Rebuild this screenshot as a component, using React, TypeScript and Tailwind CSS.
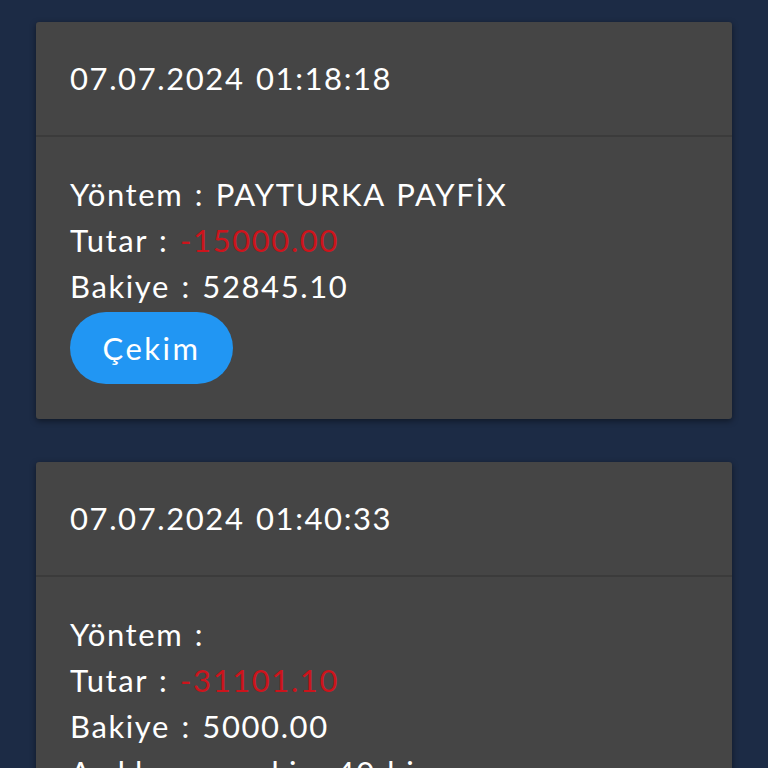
const rows = [
  {
    date: '07.07.2024 01:18:18',
    method: 'PAYTURKA PAYFİX',
    amount: '-15000.00',
    balance: '52845.10',
    button: 'Çekim',
  },
  {
    date: '07.07.2024 01:40:33',
    method: '',
    amount: '-31101.10',
    balance: '5000.00',
    note: 'çekim 40 bin',
  },
]

type Row = (typeof rows)[number] & { note?: string; button?: string }

function Card({ row }: { row: Row }) {
  return (
    <div className="bg-[#454545] rounded-[3px] shadow-[0_2px_6px_rgba(0,0,0,0.45)]">
      <div className="h-[115px] px-[34px] flex items-center border-b-2 border-[#3b3b3b]">
        <span>{row.date}</span>
      </div>
      <div className="px-[34px] pt-[34px] pb-[35px]">
        <div className="leading-[46px]">Yöntem : {row.method}</div>
        <div className="leading-[46px]">
          Tutar : <span className="text-[#cc141c]">{row.amount}</span>
        </div>
        <div className="leading-[46px]">Bakiye : {row.balance}</div>
        {row.note && <div className="leading-[46px]">Açıklama : {row.note}</div>}
        {row.button && (
          <button className="mt-[3px] h-[72px] w-[163px] rounded-full bg-[#2196f3] text-white text-[31px] tracking-[2.5px]">
            {row.button}
          </button>
        )}
      </div>
    </div>
  )
}

export default function App() {
  return (
    <div
      className="w-[768px] h-[768px] overflow-hidden bg-[#1c2b45] px-[36px] pt-[22px] text-white text-[31px] tracking-[1.6px] [word-spacing:2px]"
      style={{ fontFamily: 'Lato, "Noto Sans", sans-serif' }}
    >
      <div className="flex flex-col gap-[43px]">
        {rows.map((r) => (
          <Card key={r.date} row={r as Row} />
        ))}
      </div>
    </div>
  )
}
